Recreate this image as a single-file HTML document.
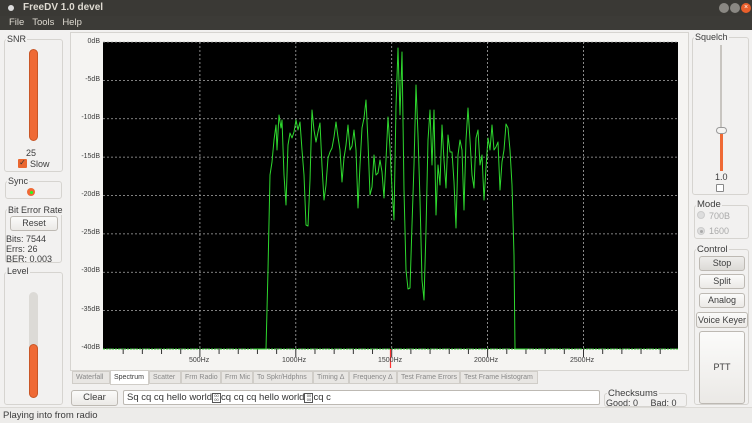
<!DOCTYPE html>
<html><head><meta charset="utf-8">
<style>
*{box-sizing:border-box;margin:0;padding:0}
body{width:752px;height:423px;overflow:hidden;background:#f2f1f0;font-family:"Liberation Sans",sans-serif;font-size:9px;color:#3c3c3c;position:relative;white-space:nowrap}
.a{position:absolute}
.grp{position:absolute;border:1px solid #d6d4d0;border-radius:3px;background:#f2f1f0}
.lbl{position:absolute;background:#f2f1f0;padding:0 1px;font-size:9px;color:#3c3c3c}
.btn{position:absolute;border:1px solid #bdb9b3;border-radius:3px;background:linear-gradient(#fbfbfa,#ebe9e6);text-align:center;font-size:9px;color:#3c3c3c}
.tab{position:absolute;top:371px;height:13px;border:1px solid #d0cdc8;background:#e8e6e3;color:#888;font-size:7px;line-height:11px;padding-left:3px;overflow:hidden;white-space:nowrap}
.yl{position:absolute;right:652px;font-size:7px;color:#3c3c3c}
.xl{position:absolute;top:357px;font-size:7px;color:#3c3c3c}
</style></head><body>
<div class="a" style="left:0;top:0;width:752px;height:16px;background:#3a3935"></div>
<div class="a" style="left:8px;top:5px;width:6px;height:6px;border-radius:50%;background:#ddd"></div>
<div class="a" style="left:23px;top:2px;color:#dfdbd2;font-weight:bold;font-size:10px">FreeDV 1.0 devel</div>
<div class="a" style="left:719px;top:3px;width:10px;height:10px;border-radius:50%;background:#8a8883"></div>
<div class="a" style="left:730px;top:3px;width:10px;height:10px;border-radius:50%;background:#8a8883"></div>
<div class="a" style="left:741px;top:3px;width:10px;height:10px;border-radius:50%;background:#e95f2b;color:#fff;font-size:7px;line-height:10px;text-align:center">×</div>
<div class="a" style="left:0;top:16px;width:752px;height:14px;background:#3c3b37"></div>
<div class="a" style="left:9px;top:17px;color:#dfdbd2;font-size:9.5px">File&nbsp;&nbsp;&nbsp;Tools&nbsp;&nbsp;&nbsp;Help</div>

<div class="grp" style="left:4px;top:39px;width:59px;height:133px"></div>
<div class="lbl" style="left:6px;top:34px">SNR</div>
<div class="a" style="left:29px;top:49px;width:9px;height:92px;border-radius:5px;background:#ef6a35;border:1px solid #c95626"></div>
<div class="a" style="left:26px;top:148px">25</div>
<div class="a" style="left:18px;top:159px;width:9px;height:9px;background:#e9662f;border-radius:1px;color:#333;font-size:8px;line-height:8px;text-align:center">✓</div>
<div class="a" style="left:30px;top:159px">Slow</div>

<div class="grp" style="left:5px;top:181px;width:57px;height:18px"></div>
<div class="lbl" style="left:7px;top:176px">Sync</div>
<div class="a" style="left:27px;top:188px;width:8px;height:8px;border-radius:50%;background:#ef6a35"></div>
<div class="a" style="left:29.5px;top:190.5px;width:3px;height:3px;border-radius:50%;background:#2f2"></div>

<div class="grp" style="left:5px;top:209px;width:57px;height:54px"></div>
<div class="lbl" style="left:7px;top:205px">Bit Error Rate</div>
<div class="btn" style="left:10px;top:216px;width:48px;height:15px;line-height:13px">Reset</div>
<div class="a" style="left:6px;top:234px;line-height:10px">Bits: 7544<br>Errs: 26<br>BER: 0.003</div>

<div class="grp" style="left:4px;top:272px;width:59px;height:133px"></div>
<div class="lbl" style="left:6px;top:266px">Level</div>
<div class="a" style="left:29px;top:292px;width:9px;height:106px;border-radius:5px;background:#dcdad6"></div>
<div class="a" style="left:29px;top:344px;width:9px;height:54px;border-radius:5px;background:#ef6a35;border:1px solid #c95626"></div>

<div class="a" style="left:70px;top:32px;width:619px;height:339px;background:#f5f4f2;border:1px solid #d6d4d0"></div>
<svg class="a" style="left:0;top:0" width="752" height="423">
<rect x="103" y="42" width="575" height="307" fill="#000"/>
<g id="grid" stroke="#aaa" stroke-width="0.8" stroke-dasharray="2,2" fill="none"></g>
<line x1="103" y1="349" x2="678" y2="349" stroke="#3c3" stroke-width="1" stroke-dasharray="2,1"/>
<g id="ticks" stroke="#333" stroke-width="1"></g>
<line x1="390.5" y1="349" x2="390.5" y2="368" stroke="#f33" stroke-width="1.2"/>
<polyline fill="none" stroke="#2ed82e" stroke-width="1" stroke-linejoin="round" points="254,349 266,349 268,270 270,175 272,162 274,140 276,125 277,150 279,115 281,128 282,120 284,175 286,205 288,145 290,133 292,138 294,132 296,120 298,130 300,122 302,150 304,175 306,225 308,226 310,180 312,110 314,130 316,142 318,132 320,123 322,166 324,200 326,185 328,158 330,152 332,148 334,137 336,122 338,137 340,150 342,182 344,158 346,145 348,125 350,150 352,146 354,130 356,150 358,208 360,165 362,128 364,118 366,100 368,142 370,195 372,187 374,155 376,175 378,173 380,160 382,172 384,198 386,160 388,117 390,148 392,189 394,220 396,106 398,48 400,115 402,52 404,190 406,270 408,289 410,288 412,225 414,165 416,85 418,135 420,200 422,280 424,300 426,230 428,140 430,110 432,165 434,110 436,215 438,165 440,185 442,125 444,160 446,188 448,135 450,152 452,152 454,182 456,228 458,155 460,140 462,150 464,210 466,140 468,108 470,140 472,175 474,188 476,138 478,130 480,165 482,155 484,200 486,168 488,138 490,150 492,125 494,150 496,147 498,142 500,190 502,162 504,150 506,124 508,128 510,150 512,185 514,255 515,349 528,349"/>
</svg>
<div class="yl" style="top:38px">0dB</div>
<div class="yl" style="top:76px">-5dB</div>
<div class="yl" style="top:114px">-10dB</div>
<div class="yl" style="top:153px">-15dB</div>
<div class="yl" style="top:191px">-20dB</div>
<div class="yl" style="top:229px">-25dB</div>
<div class="yl" style="top:267px">-30dB</div>
<div class="yl" style="top:306px">-35dB</div>
<div class="yl" style="top:344px">-40dB</div>
<div class="xl" style="left:189px">500Hz</div>
<div class="xl" style="left:282px">1000Hz</div>
<div class="xl" style="left:378px">1500Hz</div>
<div class="xl" style="left:474px">2000Hz</div>
<div class="xl" style="left:570px">2500Hz</div>

<div class="tab" style="left:72px;width:38px">Waterfall</div>
<div class="tab" style="left:110px;width:39px;top:370px;height:15px;background:#fff;color:#3c3c3c;line-height:14px">Spectrum</div>
<div class="tab" style="left:149px;width:32px">Scatter</div>
<div class="tab" style="left:181px;width:40px">Frm Radio</div>
<div class="tab" style="left:221px;width:32px">Frm Mic</div>
<div class="tab" style="left:253px;width:60px">To Spkr/Hdphns</div>
<div class="tab" style="left:313px;width:36px">Timing Δ</div>
<div class="tab" style="left:349px;width:48px">Frequency Δ</div>
<div class="tab" style="left:397px;width:63px">Test Frame Errors</div>
<div class="tab" style="left:460px;width:78px">Test Frame Histogram</div>

<div class="btn" style="left:71px;top:390px;width:47px;height:16px;line-height:14px;font-size:9.5px">Clear</div>
<div class="a" style="left:123px;top:390px;width:477px;height:15px;background:#fff;border:1px solid #bdb9b3;border-radius:2px;padding-left:3px;line-height:13px;font-size:9.5px;color:#333">Sq cq cq hello world<span style="display:inline-block;width:9px;height:10px;border:1px solid #555;vertical-align:-1px;font-size:4px;line-height:4px;text-align:center">00<br>00</span>cq cq cq hello world<span style="display:inline-block;width:9px;height:10px;border:1px solid #555;vertical-align:-1px;font-size:4px;line-height:4px;text-align:center">00<br>00</span>cq c</div>
<div class="grp" style="left:604px;top:393px;width:83px;height:14px"></div>
<div class="lbl" style="left:607px;top:388px;font-size:9.5px">Checksums</div>
<div class="a" style="left:606px;top:398px;font-size:9px">Good: 0&nbsp;&nbsp;&nbsp;&nbsp;&nbsp;Bad: 0</div>

<div class="grp" style="left:692px;top:37px;width:57px;height:158px"></div>
<div class="lbl" style="left:694px;top:32px">Squelch</div>
<div class="a" style="left:720px;top:45px;width:2px;height:85px;background:#c8c5c0"></div>
<div class="a" style="left:720px;top:131px;width:3px;height:40px;background:#ef6a35"></div>
<div class="a" style="left:716px;top:127px;width:11px;height:7px;border-radius:4px;background:#f5f4f2;border:1px solid #999"></div>
<div class="a" style="left:715px;top:172px">1.0</div>
<div class="a" style="left:716px;top:184px;width:8px;height:8px;border:1px solid #888;border-radius:1px;background:#fff"></div>

<div class="grp" style="left:694px;top:205px;width:55px;height:34px"></div>
<div class="lbl" style="left:696px;top:199px;font-size:9.5px">Mode</div>
<div class="a" style="left:697px;top:211px;width:8px;height:8px;border-radius:50%;background:#ddd;border:1px solid #ccc"></div>
<div class="a" style="left:709px;top:211px;color:#aaa">700B</div>
<div class="a" style="left:697px;top:227px;width:8px;height:8px;border-radius:50%;background:#ddd;border:1px solid #ccc"></div>
<div class="a" style="left:699.5px;top:229.5px;width:3px;height:3px;border-radius:50%;background:#aaa"></div>
<div class="a" style="left:709px;top:226px;color:#aaa">1600</div>

<div class="grp" style="left:694px;top:249px;width:55px;height:156px"></div>
<div class="lbl" style="left:696px;top:244px;font-size:9.5px">Control</div>
<div class="btn" style="left:699px;top:256px;width:46px;height:15px;line-height:13px;background:linear-gradient(#eeedeb,#dcdad6)">Stop</div>
<div class="btn" style="left:699px;top:274px;width:46px;height:15px;line-height:13px">Split</div>
<div class="btn" style="left:699px;top:293px;width:46px;height:15px;line-height:13px">Analog</div>
<div class="btn" style="left:696px;top:312px;width:52px;height:16px;line-height:14px">Voice Keyer</div>
<div class="btn" style="left:699px;top:331px;width:46px;height:73px;line-height:71px">PTT</div>

<div class="a" style="left:0;top:407px;width:752px;height:16px;background:#edecea;border-top:1px solid #dcdad6"></div>
<div class="a" style="left:3px;top:410px;font-size:9.5px">Playing into from radio</div>
<script>
var g=document.getElementById('grid'),t=document.getElementById('ticks'),s='',u='';
for(var i=0;i<9;i++){var y=42+i*38.375;s+='<line x1="103" y1="'+y+'" x2="678" y2="'+y+'"/>';}
for(var j=1;j<=5;j++){var x=104+j*95.9;s+='<line x1="'+x+'" y1="42" x2="'+x+'" y2="349"/>';}
g.innerHTML=s;
for(var k=1;k<30;k++){var xx=104+k*19.18;u+='<line x1="'+xx+'" y1="349" x2="'+xx+'" y2="'+(k%5==0?357:354)+'"/>';}
t.innerHTML=u;
</script>
</body></html>
